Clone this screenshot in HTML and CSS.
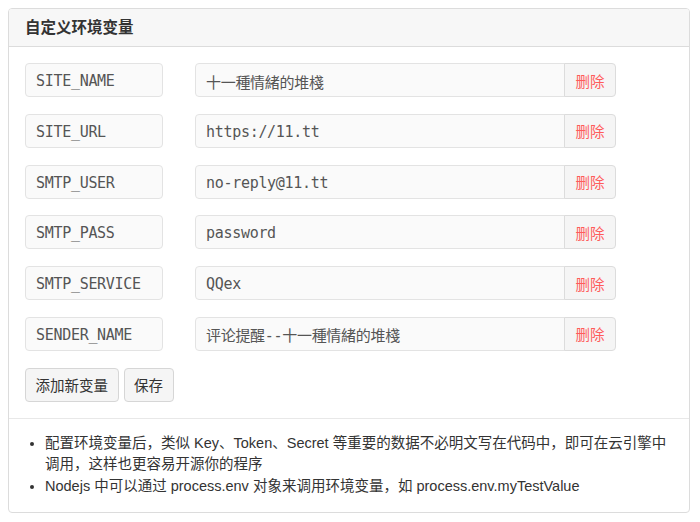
FILE: index.html
```html
<!DOCTYPE html>
<html lang="zh-CN">
<head>
<meta charset="utf-8">
<title>自定义环境变量</title>
<link rel="stylesheet" href="styles.css">
</head>
<body>
<div class="panel">
  <div class="panel-head">自定义环境变量</div>
  <div class="panel-body">
    <div class="row">
      <input class="key" value="SITE_NAME">
      <div class="group"><input class="val" value="十一種情緒的堆棧"><button class="del">删除</button></div>
    </div>
    <div class="row">
      <input class="key" value="SITE_URL">
      <div class="group"><input class="val" value="https://11.tt"><button class="del">删除</button></div>
    </div>
    <div class="row">
      <input class="key" value="SMTP_USER">
      <div class="group"><input class="val" value="no-reply@11.tt"><button class="del">删除</button></div>
    </div>
    <div class="row">
      <input class="key" value="SMTP_PASS">
      <div class="group"><input class="val" value="password"><button class="del">删除</button></div>
    </div>
    <div class="row">
      <input class="key" value="SMTP_SERVICE">
      <div class="group"><input class="val" value="QQex"><button class="del">删除</button></div>
    </div>
    <div class="row">
      <input class="key" value="SENDER_NAME">
      <div class="group"><input class="val" value="评论提醒--十一種情緒的堆棧"><button class="del">删除</button></div>
    </div>
    <div class="actions">
      <button class="btn">添加新变量</button>
      <button class="btn">保存</button>
    </div>
  </div>
  <div class="panel-foot">
    <ul>
      <li>配置环境变量后，类似 Key、Token、Secret 等重要的数据不必明文写在代码中，即可在云引擎中调用，这样也更容易开源你的程序</li>
      <li>Nodejs 中可以通过 process.env 对象来调用环境变量，如 process.env.myTestValue</li>
    </ul>
  </div>
</div>
</body>
</html>
```
FILE: styles.css
```css
* { box-sizing: border-box; }
body {
  margin: 8px;
  font-family: "Liberation Sans", "Noto Sans CJK SC", sans-serif;
  color: #333;
  background: #fff;
}
.panel {
  width: 682px;
  border: 1px solid #dcdcdc;
  border-radius: 4px;
  overflow: hidden;
}
.panel-head {
  height: 38px;
  background: #f7f7f7;
  border-bottom: 1px solid #dcdcdc;
  padding: 0 16px;
  font-size: 15.5px;
  font-weight: bold;
  line-height: 37px;
  color: #333;
}
.panel-body {
  padding: 16px;
}
.row {
  display: flex;
  align-items: center;
  gap: 32px;
  margin-bottom: 16.8px;
  height: 34px;
}
input {
  height: 34px;
  border: 1px solid #e3e3e3;
  background: #fafafa;
  border-radius: 4px;
  font-family: "DejaVu Sans Mono", "Noto Sans CJK SC", monospace;
  font-size: 15px;
  letter-spacing: -0.3px;
  line-height: 30px;
  color: #555;
  padding: 2px 10px 0 10px;
  outline: none;
}
.key { width: 138px; }
.group {
  display: flex;
  width: 421px;
}
.val {
  flex: 1;
  min-width: 0;
  border-radius: 4px 0 0 4px;
}
.del {
  width: 52px;
  height: 34px;
  border: 1px solid #dcdcdc;
  margin-left: -1px;
  border-radius: 0 4px 4px 0;
  background: #f5f5f5;
  color: #ff5b5b;
  font-family: "Liberation Sans", "Noto Sans CJK SC", sans-serif;
  font-size: 14.5px;
  padding: 0;
}
.actions {
  display: flex;
  gap: 5px;
}
.btn {
  height: 34px;
  padding: 0 9.5px;
  border: 1px solid #d6d6d6;
  border-radius: 4px;
  background: #f5f5f5;
  color: #333;
  font-family: "Liberation Sans", "Noto Sans CJK SC", sans-serif;
  font-size: 14.5px;
}
.panel-foot {
  border-top: 1px solid #e8e8e8;
  padding: 14px 16px 15px 16px;
}
.panel-foot ul {
  margin: 0;
  padding-left: 20px;
  font-size: 14.5px;
  line-height: 21.5px;
  color: #333;
}
```
